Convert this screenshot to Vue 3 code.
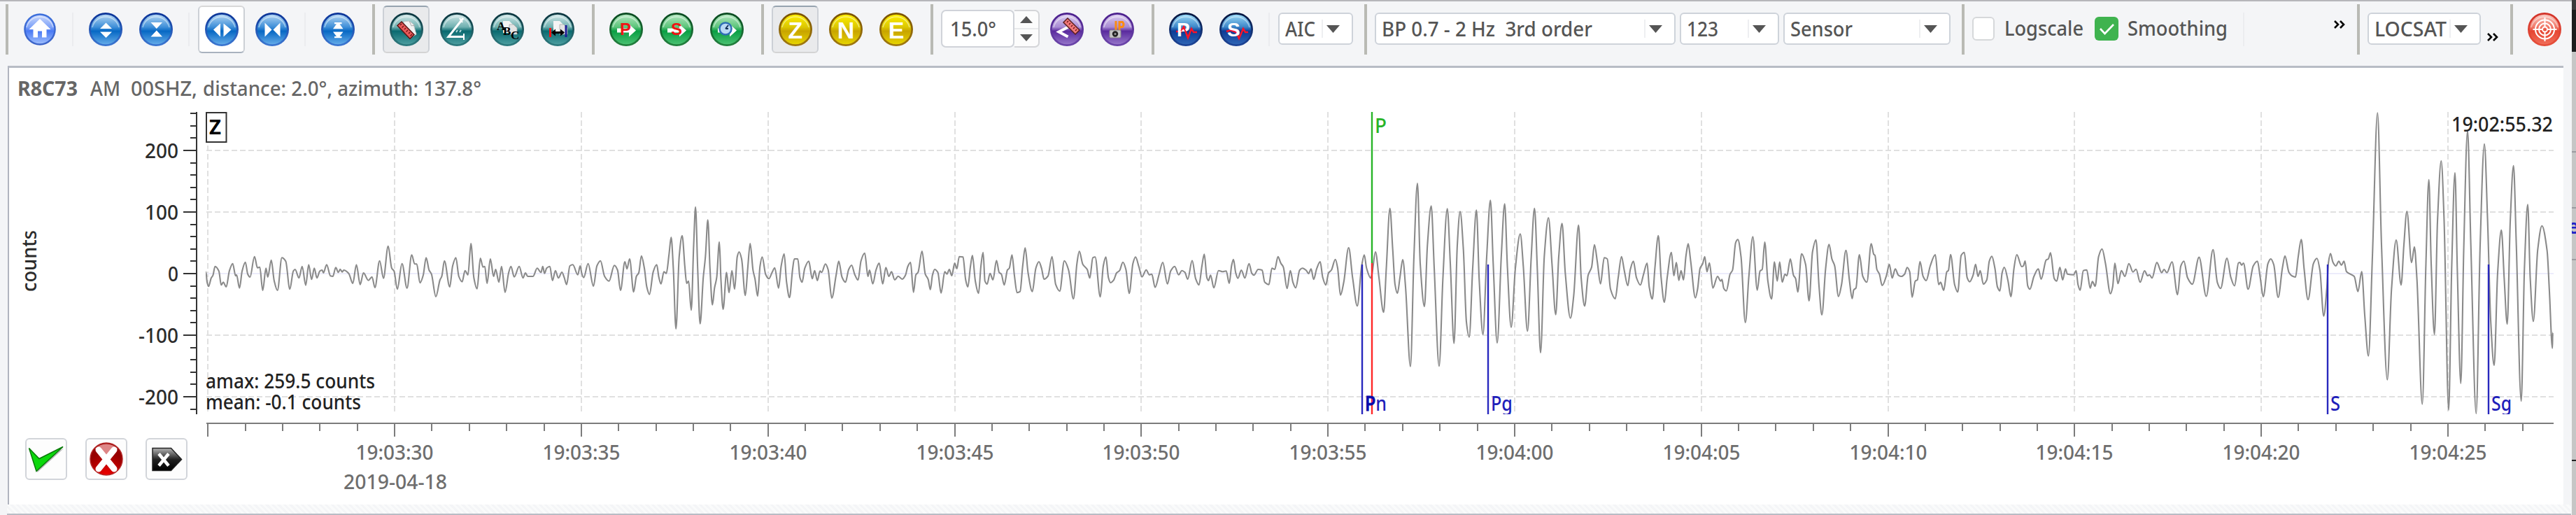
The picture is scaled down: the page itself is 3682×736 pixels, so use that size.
<script setup>
const BLUE = 'blue', TEAL = 'teal', GREEN = 'green', GOLD = 'gold', PURPLE = 'purple', NAVY = 'navy'

// Toolbar content, left to right
const items = [
  { t: 'grip', first: true },
  { t: 'btn', c: 'home', g: 'home' },
  { t: 'sep' },
  { t: 'btn', c: BLUE, g: 'expandV' },
  { t: 'btn', c: BLUE, g: 'shrinkV', next: true },
  { t: 'sep' },
  { t: 'btn', c: BLUE, g: 'expandH', raised: true },
  { t: 'btn', c: BLUE, g: 'shrinkH', next: true },
  { t: 'sep' },
  { t: 'btn', c: BLUE, g: 'fitV' },
  { t: 'grip' },
  { t: 'btn', c: TEAL, g: 'ruler', pressed: true },
  { t: 'btn', c: TEAL, g: 'angle', next: true },
  { t: 'btn', c: TEAL, g: 'abc', next: true },
  { t: 'btn', c: TEAL, g: 'span', next: true },
  { t: 'grip' },
  { t: 'btn', c: GREEN, g: 'goP' },
  { t: 'btn', c: GREEN, g: 'goS', next: true },
  { t: 'btn', c: GREEN, g: 'goClock', next: true },
  { t: 'grip' },
  { t: 'btn', c: GOLD, g: 'letter', l: 'Z', pressed: true },
  { t: 'btn', c: GOLD, g: 'letter', l: 'N', next: true },
  { t: 'btn', c: GOLD, g: 'letter', l: 'E', next: true },
  { t: 'grip' },
  { t: 'spin' },
  { t: 'btn', c: PURPLE, g: 'rotate', next: true },
  { t: 'btn', c: PURPLE, g: 'camera', next: true },
  { t: 'grip' },
  { t: 'btn', c: NAVY, g: 'pick', l: 'P' },
  { t: 'btn', c: NAVY, g: 'pick', l: 'S', next: true },
  { t: 'sep' },
  { t: 'combo', k: 'aic', label: 'AIC', len: 43 },
  { t: 'grip' },
  { t: 'combo', k: 'filter', label: 'BP 0.7 - 2 Hz\u00a0 3rd order', len: 301 },
  { t: 'combo', k: 'num', label: '123', len: 45 },
  { t: 'combo', k: 'sensor', label: 'Sensor', len: 89 },
  { t: 'grip' },
  { t: 'check', k: 'off', label: 'Logscale', len: 113 },
  { t: 'check', k: 'on', label: 'Smoothing', len: 143 },
  { t: 'sep', wide: true },
  { t: 'more', k: 'hi' },
  { t: 'grip' },
  { t: 'combo', k: 'loc', label: 'LOCSAT', len: 103 },
  { t: 'more', k: 'lo' },
  { t: 'grip' },
  { t: 'btn', c: 'red', g: 'target' },
]

const orbs = [
  { id: 'blue', rim: ['#0a3296', '#3c78d2'], fill: ['#b4d7f4', '#3f8fd8', '#0768c4', '#62aae8'] },
  { id: 'home', rim: ['#3c6fdc', '#3c64c8'], fill: ['#c8d7fc', '#7ea2f8', '#4a7af4', '#9cbcfc'] },
  { id: 'teal', rim: ['#08323c', '#2e7c80'], fill: ['#d2e8e8', '#6fb0b0', '#0a6a70', '#4a9c9e'] },
  { id: 'green', rim: ['#08481f', '#23823f'], fill: ['#b4e8c0', '#5cc47a', '#0a9e44', '#48c070'] },
  { id: 'gold', rim: ['#7a5200', '#a07a10'], fill: ['#fff000', '#dcc800', '#c8a400', '#e6d400'] },
  { id: 'purple', rim: ['#4a1e8c', '#6c46aa'], fill: ['#dccdf0', '#a98cd4', '#5a2a9e', '#9474c8'] },
  { id: 'navy', rim: ['#04143c', '#1e469a'], fill: ['#9cdcf8', '#3c86c8', '#0c3c96', '#2e64b4'] },
  { id: 'red', rim: ['#d23228', '#e6503c'], fill: ['#fac8c0', '#f07868', '#e64632', '#f06c58'] },
]

// Turning points of the trace: [x origin, x scale, y origin, y scale, x, y, x, y, ...]
const segments = [
  [280, 2.376, 150, 3, 34,715,38,760,43,778,52,742,58,730,65,692,78,712,86,772,93,760,103,780,114,710,125,680,135,733,138,728,148,785,157,712,168,674,176,725,184,738,199,650,209,698,217,695,227,795,238,700,244,738,256,665,266,755,277,795,292,655,305,670,319,790,331,712,337,705,350,742,361,692,373,773,383,685,393,748,402,700,411,742,421,712,429,708,433,720,444,685,457,733,465,735,475,697,484,718,490,704,497,716,502,708,519,722,533,765,545,685,558,770,569,720,586,752,598,737,608,783,624,668,637,743,653,605,665,700,673,712,684,790,700,680,717,785,733,643,743,682,750,682,761,763,772,730,782,655,792,708,800,725,815,822,829,750,835,735,844,668,862,780,872,690,883,655,893,735,904,758,914,710,924,728,934,594,944,740,955,788,966,657,975,695,981,692,989,765,1000,660,1011,735,1018,705,1029,760,1038,692,1050,803,1062,720,1070,692,1081,737,1098,692,1111,742,1119,720,1127,735,1145,735,1159,700,1172,718,1178,692,1184,722,1191,700,1202,692,1211,753,1221,710,1231,742,1243,717,1251,740,1259,770,1270,690,1280,685,1297,728,1305,690,1311,725,1317,740,1332,680,1350,777,1362,690,1374,668,1388,735,1403,755,1421,688,1432,708,1442,795,1457,672,1464,703,1473,660],
  [900, 2.613, 150, 3, 15,802,25,735,34,720,44,647,55,700,64,780,74,812,88,715,101,685,109,738,117,767,128,715,137,722,147,640,155,567,163,700,173,960,185,650,196,560,206,690,213,765,220,755,230,880,239,600,246,437,254,700,263,938,275,740,283,650,292,493,300,700,309,857,317,785,325,740,335,587,341,750,349,876,362,718,371,805,382,710,392,790,402,650,409,630,418,660,432,817,441,700,450,594,461,710,468,745,478,820,487,690,495,652,508,727,520,745,532,718,542,698,556,785,566,690,577,638,586,760,597,826,609,700,615,660,628,660,636,740,644,760,654,700,669,670,682,745,691,710,701,753,711,712,717,718,731,682,741,705,755,828,771,730,781,670,793,738,806,760,818,705,829,687,840,725,853,751,864,668,878,635,890,735,896,708,908,767,920,708,932,678,945,767,957,697,968,735,978,715,990,750,1003,734,1018,747,1030,730,1039,692,1049,675,1060,803,1069,728,1077,718,1092,627,1104,725,1115,748,1123,792,1131,730,1139,705,1151,718,1163,806,1177,715,1185,725,1194,705,1203,732,1214,678,1222,702,1231,650,1245,652,1255,750,1263,780,1273,690,1280,645,1291,755,1303,808,1312,690,1320,632,1327,755,1335,768,1346,722,1357,750,1370,667,1380,718,1388,725,1399,772,1411,707,1418,700,1428,643,1437,730,1447,805,1458,800,1468,690,1477,613,1488,720,1504,800,1517,700],
  [1480, 3, 150, 3, 15,672,26,700,37,747,54,733,71,650,87,770,104,798,124,668,142,707,163,831,178,680,188,627,203,683,222,705,233,742,246,655,256,652,278,823,291,690,302,652,313,740,322,762,336,750,348,720,361,710,375,674,388,705,402,808,418,680,429,652,444,695,457,737,475,707,488,728,499,725,513,782,530,727,546,675,566,767,580,712,597,692,614,728,628,710,641,718,653,747,672,667,687,745,701,772,714,690,724,640,735,740,742,753,751,730,765,784,785,710,803,715,818,712,831,765,841,690,849,662,859,720,868,743,883,708,898,742,916,680,928,722,937,730,955,705,972,708,983,760,1001,770,1014,700,1026,705,1040,650,1052,678,1063,695,1079,787,1093,710,1104,760,1116,784,1133,708,1145,700,1162,710,1171,723,1182,703,1193,748,1206,702,1221,672,1232,740,1245,772,1257,720,1269,708,1286,662,1296,700,1308,815,1322,760,1343,612,1360,740,1380,862,1399,690,1410,643,1420,700],
  [1900, 3, 150, 3, 178,742,184,720,198,630,213,740,233,889,245,690,260,443,272,620,282,770,292,808,303,740,315,663,327,780,348,1121,363,650,378,336,390,680,408,864,421,600,437,433,450,700,471,1120,487,750,506,445,519,680,535,1022,549,600,561,457,575,620,588,930,600,995,615,700,631,451,643,750,659,984,675,650,691,409,703,680,720,1020,738,640,752,424,764,700,780,953,798,700,819,553,832,690,850,970,866,650,880,443,892,700,906,1062,922,650,940,484,955,680,971,899,984,650,998,508,1012,720,1034,914,1048,820,1069,515,1080,740,1095,862,1110,730,1125,695,1137,599,1149,670,1163,767,1179,655,1192,660,1206,790,1226,831,1239,740,1253,650,1265,710,1280,775,1291,705,1304,670,1317,740,1334,772,1347,728,1363,678,1372,780,1385,832,1397,690,1411,560,1423,740,1437,846,1449,740,1467,632],
  [2380, 2.24, 250, 3, 28,432,36,375,44,452,51,410,59,450,67,345,74,295,82,370,97,527,104,490,112,400,120,382,127,350,134,415,142,377,153,485,168,435,178,455,182,448,188,487,196,497,208,425,216,408,226,290,233,277,243,350,257,633,268,440,281,265,295,494,304,412,311,405,319,288,329,455,341,532,350,373,359,455,367,373,375,460,384,425,390,433,401,360,411,430,418,445,425,502,437,338,450,385,461,540,472,330,483,278,493,480,502,600,514,400,525,298,534,360,543,390,555,521,565,470,579,323,590,450,599,530,604,493,611,485,622,342,633,435,646,460,660,295,668,340,672,345,678,405,686,425,695,474,709,430,718,383,727,442,737,403,747,430,757,435,767,425,775,397,783,415,791,524,801,455,808,450,816,371,826,435,836,453,849,390,865,342,876,470,882,460,892,495,902,415,907,410,914,341,927,470,937,502,948,345,958,332,967,440,975,458,986,430,994,383,1002,435,1009,410,1019,468,1030,450,1038,370,1046,349,1056,400,1064,480,1072,497,1079,420,1086,396,1098,455,1107,522,1117,400,1126,342,1142,393,1147,390,1153,369,1161,475,1168,490,1181,435,1195,403,1204,447,1220,365,1227,360,1234,334,1246,445,1254,455,1264,396,1273,450,1282,403,1288,425,1308,428,1316,410,1322,470,1329,494,1339,410,1350,407,1361,485,1368,457,1377,477,1388,350,1399,317,1410,380,1426,509,1433,480,1440,378,1450,466,1461,410,1472,435,1485,380,1498,416,1508,404,1521,460,1535,411,1545,432,1551,428,1559,442],
  [2790, 1.758, 0, 2.13, 515,799,527,830,533,820,540,830,553,797,567,897,575,810,583,795,592,845,604,865,621,783,639,902,656,760,667,860,675,878,691,786,701,845,710,870,720,800],
  [3200, 3, 150, 3, 5,675,12,687,20,678,40,790,62,690,80,670,92,740,105,822,125,680,137,660,150,685,169,825,187,700,198,647,215,718,228,733,243,738,255,650,268,577,280,700,297,835,320,680,335,658,348,710,364,905,378,780,384,680,393,637,404,675,416,690,429,670,440,687,451,670,462,715,495,735,511,800,527,714,540,900,556,1076,573,650,595,34,612,600,637,1178,655,790,675,579,696,772,708,600,721,456,741,676,753,608,764,750,787,1283,802,700,815,320,825,680,839,984,852,500,868,240,880,480,900,1308,913,700,927,290,937,700,952,1194,965,600,981,110,995,600,1018,1323,1035,600,1053,167,1067,500,1080,920,1095,1117,1110,720,1126,536,1138,740,1151,940,1164,500,1178,260,1190,600,1211,1270,1225,700,1239,427,1250,750,1263,928,1282,620,1300,518,1322,625,1332,800,1345,1043,1346,975],
]

// Monotone cubic interpolation: no overshoot at the turning points
function tracePath() {
  const p = []
  for (const [ox, sx, oy, sy, ...v] of segments) {
    for (let i = 0; i < v.length; i += 2) p.push([ox + v[i] / sx, oy + v[i + 1] / sy])
  }
  const slope = i => (p[i + 1][1] - p[i][1]) / (p[i + 1][0] - p[i][0])
  const m = p.map((_, i) => {
    if (i === 0 || i === p.length - 1) return 0
    const a = slope(i - 1), b = slope(i)
    return a * b <= 0 ? 0 : (2 * a * b) / (a + b)
  })
  let d = `M${p[0][0].toFixed(1)} ${p[0][1].toFixed(1)}`
  for (let i = 1; i < p.length; i++) {
    const h = (p[i][0] - p[i - 1][0]) / 3
    const c = [p[i - 1][0] + h, p[i - 1][1] + m[i - 1] * h, p[i][0] - h, p[i][1] - m[i] * h, ...p[i]]
    d += 'C' + c.map(n => n.toFixed(1)).join(' ')
  }
  return d
}
const trace = tracePath()

const pad = n => String(n).padStart(2, '0')
const xTicks = Array.from({ length: 63 }, (_, k) => {
  const s = 3 * 60 + 25 + k
  const major = k % 5 === 0
  return {
    x: Math.round(297.3 + k * 53.36),
    major,
    label: major && k ? `19:${pad(Math.floor(s / 60))}:${pad(s % 60)}` : '',
  }
})
const yTicks = []
for (let v = -220; v <= 260; v += 20) {
  yTicks.push({ y: Math.round(391 - v * 0.88), major: v % 100 === 0, v })
}
const yLen = { '200': 48, '100': 48, '0': 15, '-100': 57, '-200': 57 }

const phases = [
  { x: 1947, l: 'Pn', len: 31, strong: true },
  { x: 2127, l: 'Pg', len: 31 },
  { x: 3327, l: 'S', len: 14 },
  { x: 3557, l: 'Sg', len: 29 },
]
</script>

<template>
  <div class="screen">
    <svg class="defs" width="0" height="0">
      <defs>
        <template v-for="o in orbs" :key="o.id">
          <linearGradient :id="'rim-' + o.id" x1="0" y1="0" x2="0" y2="1">
            <stop offset="0" :stop-color="o.rim[0]" /><stop offset="1" :stop-color="o.rim[1]" />
          </linearGradient>
          <linearGradient :id="'orb-' + o.id" x1="0" y1="0" x2="0" y2="1">
            <stop offset="0" :stop-color="o.fill[0]" /><stop offset=".42" :stop-color="o.fill[1]" />
            <stop offset=".56" :stop-color="o.fill[2]" /><stop offset="1" :stop-color="o.fill[3]" />
          </linearGradient>
        </template>
      </defs>
    </svg>

    <div class="window">
      <div class="toolbar">
        <template v-for="(it, i) in items" :key="i">
          <i v-if="it.t === 'grip'" class="grip" :class="{ first: it.first }"></i>
          <i v-else-if="it.t === 'sep'" class="sep" :class="{ wide: it.wide }"></i>

          <div v-else-if="it.t === 'btn'" class="btn" :class="{ raised: it.raised, pressed: it.pressed, next: it.next }">
            <svg width="48" height="48" viewBox="0 0 48 48">
              <circle cx="24" cy="24" :r="it.c === 'home' ? 22.8 : 24" :fill="`url(#rim-${it.c})`" />
              <circle cx="24" cy="24" :r="it.c === 'home' ? 20.3 : 21.3" :fill="`url(#orb-${it.c})`" />
              <path d="M5 21A19.5 19.5 0 0 1 43 21" fill="none" stroke="#fff" stroke-opacity=".45" stroke-width="1.5" />

              <path v-if="it.g === 'home'" d="M24 9L8.5 24h6v11.500h6.500v-9h6v9h6.500V24h6z" fill="#fff" />
              <path v-else-if="it.g === 'expandV'" d="M16 23h17l-8.500-8.500zM16 27.500h17l-8.500 8.500z" fill="#fff" />
              <path v-else-if="it.g === 'shrinkV'" d="M16.500 14h16.500l-8.200 9zM16.500 34.500h16.500l-8.200-9z" fill="#fff" />
              <path v-else-if="it.g === 'expandH'" d="M12 24.500L22 15.500v19zM37.500 24.500L26.500 15.500v19z" fill="#fff" />
              <path v-else-if="it.g === 'shrinkH'" d="M13.500 14.500v20l10-10zM35.500 14.500v20l-10-10z" fill="#fff" />
              <path v-else-if="it.g === 'fitV'" d="M19 14h10.500v2.200h-3l5 7h-14.500l5-7h-3zM17 27.500h14.500l-5 6.500h3v2.200H19V34h3z" fill="#fff" />

              <g v-else-if="it.g === 'ruler'">
                <path d="M20 13l8-1 6 5 4 14-5 3-13-13z" fill="#f2f2f2" stroke="#c8c8c8" />
                <path d="M28 12l3 7 5-1" fill="none" stroke="#aaa" />
                <path d="M11 18.500l6-5.500 18 18.500-6 6z" fill="#e85a5a" stroke="#5a1414" stroke-width="1.5" />
                <path d="M17 16l-2 2M20 19l-2.500 2.500M23 22l-2 2M26 25l-2.500 2.500M29 28l-2 2M32 31l-2.500 2.500" stroke="#701414" stroke-width="1.4" />
              </g>
              <g v-else-if="it.g === 'angle'" fill="none" stroke="#fff" stroke-width="3">
                <path d="M33 8L12 34.500h23" />
                <path d="M28 8l4 6M34 30v9" stroke-width="2" />
                <path d="M23 28l2-3M28 28l2-3" stroke-width="2" stroke="#b4dcdc" />
              </g>
              <g v-else-if="it.g === 'abc' || it.g === 'span'">
                <path d="M18 12h9l5 5v12H18z" fill="#f4f4f4" />
                <path d="M27 17h6l5 5v9H27z" fill="#e4e4e4" stroke="#aaa" stroke-width=".8" />
                <g v-if="it.g === 'abc'" class="glyph serif" font-size="17">
                  <text x="9" y="25">A</text><text x="18" y="32">B</text><text x="29" y="38">C</text>
                </g>
                <g v-else fill="none" stroke-width="3">
                  <path d="M17 28.500h16" stroke="#000" />
                  <path d="M15 28.500l6-5v10zM34 28.500l-6-5v10z" fill="#000" stroke="none" />
                  <path d="M13.500 22v13" stroke="#f01414" /><path d="M36 18v17" stroke="#1e1e96" />
                </g>
              </g>
              <g v-else-if="it.g === 'goP' || it.g === 'goS' || it.g === 'goClock'">
                <path d="M11 22.500h17v-6l10 9-10 9v-6H11z" fill="#fff" />
                <text v-if="it.g === 'goP'" class="glyph hot" x="15" y="31.500" font-size="24">P</text>
                <text v-else-if="it.g === 'goS'" class="glyph hot" x="16" y="31.500" font-size="24">S</text>
                <g v-else>
                  <circle cx="22" cy="23" r="8.500" fill="#b8d8f4" stroke="#2e6eb4" stroke-width="2.500" />
                  <path d="M22 23l4-5M22 23h4" stroke="#14325a" stroke-width="2" />
                </g>
              </g>
              <text v-else-if="it.g === 'letter'" class="glyph mid" x="24" y="36.500" font-size="34">{{ it.l }}</text>
              <g v-else-if="it.g === 'rotate'">
                <path d="M27 20L12.500 27.500l13 7" fill="none" stroke="#fff" stroke-width="4" />
                <path d="M19 14l6-6 17 17-6 6z" fill="#f07878" stroke="#5a1e1e" stroke-width="1.500" />
                <path d="M26 12l-2 2M29 15l-2 2M32 18l-2 2M35 21l-2 2M38 24l-2 2" stroke="#701414" stroke-width="1.400" />
              </g>
              <g v-else-if="it.g === 'camera'">
                <path d="M22 12v13M27 26V13.500h4.500q3 3.500 0 7h-4.500" fill="none" stroke="#fa8c14" stroke-width="3" />
                <rect x="13" y="25" width="16" height="11" rx="1.500" fill="#c4c4c4" stroke="#888" />
                <circle cx="21" cy="30.500" r="4.200" fill="#222" /><circle cx="21" cy="30.500" r="1.500" fill="#999" />
              </g>
              <g v-else-if="it.g === 'pick'">
                <path v-if="it.l === 'P'" d="M10 27h8l3-7 6 16 5-13 3 5h5" fill="none" stroke="#fa1428" stroke-width="2.500" />
                <path v-else d="M10 27l6-2 8 3 4 9 6-14 3 5h4" fill="none" stroke="#fa1428" stroke-width="2.500" />
                <text class="glyph" x="11" y="34" font-size="28">{{ it.l }}</text>
                <path v-if="it.l === 'P'" d="M17 26l4-5 6 15 2-4" fill="none" stroke="#fa1428" stroke-width="2" />
              </g>
              <g v-else fill="none" stroke="#fff" stroke-width="2">
                <circle cx="24.500" cy="24" r="13.500" /><circle cx="24.500" cy="24" r="8.500" /><circle cx="24.500" cy="24" r="3.500" />
                <path d="M24.500 7v14M24.500 27v14M7.500 24h14M27.500 24h14" />
              </g>
            </svg>
          </div>

          <div v-else-if="it.t === 'spin'" class="spin">
            <div class="spin-field"><svg width="66" height="40"><text x="0" y="30.500" textLength="66" lengthAdjust="spacingAndGlyphs">15.0°</text></svg></div>
            <div class="spin-btns">
              <div><svg width="18" height="10"><path d="M0 10L9 0l9 10z" fill="#555" /></svg></div>
              <div><svg width="18" height="10"><path d="M0 0h18L9 10z" fill="#555" /></svg></div>
            </div>
          </div>

          <div v-else-if="it.t === 'combo'" class="combo" :class="it.k">
            <svg class="combo-label" :width="it.len + 4" height="40"><text x="0" y="31" :textLength="it.len" lengthAdjust="spacingAndGlyphs">{{ it.label }}</text></svg>
            <i class="combo-line"></i>
            <svg width="19" height="11"><path d="M0 0h19L9.500 11z" fill="#555" /></svg>
          </div>

          <div v-else-if="it.t === 'check'" class="check" :class="it.k">
            <span class="box">
              <svg v-if="it.k === 'on'" width="34" height="34"><path d="M8 17l6.500 7L27 11" fill="none" stroke="#fff" stroke-width="2.600" /></svg>
            </span>
            <svg :width="it.len + 4" height="40"><text x="0" y="30" :textLength="it.len" lengthAdjust="spacingAndGlyphs">{{ it.label }}</text></svg>
          </div>

          <div v-else class="more" :class="it.k">
            <svg width="17" height="12"><path d="M1 1l5 5-5 5M9 1l5 5-5 5" fill="none" stroke="#000" stroke-width="2.600" /></svg>
          </div>
        </template>
      </div>

      <div class="panel">
        <svg class="plot" width="3651" height="624" viewBox="13 97 3651 624">
          <defs><clipPath id="plot-clip"><rect x="294" y="159" width="3358" height="433" /></clipPath></defs>

          <g fill="#666">
            <text x="25" y="137" font-weight="700" textLength="86" lengthAdjust="spacingAndGlyphs">R8C73</text>
            <text x="129" y="137" textLength="43" lengthAdjust="spacingAndGlyphs">AM</text>
            <text x="187" y="137" textLength="95" lengthAdjust="spacingAndGlyphs">00SHZ,</text>
            <text x="290" y="137" textLength="398" lengthAdjust="spacingAndGlyphs">distance: 2.0°, azimuth: 137.8°</text>
          </g>

          <g stroke="#e0e0e0" stroke-width="2" stroke-dasharray="8 4">
            <path v-for="t in xTicks.filter(t => t.major)" :key="t.x" :d="`M${t.x} 160V588`" />
            <path v-for="y in [215, 303, 479, 567]" :key="y" :d="`M295 ${y}H3650`" />
          </g>
          <path d="M295 391H3650" stroke="#ececfb" stroke-width="2" />

          <g stroke="#333" stroke-width="2">
            <path d="M281 160V592" />
            <path v-for="t in yTicks" :key="t.v" :d="`M${t.major ? 262 : 272} ${t.y}H281`" />
          </g>
          <g fill="#2c2c2c" text-anchor="end">
            <text v-for="t in yTicks.filter(t => t.major)" :key="t.v" x="255" :y="t.y + 10.5" :textLength="yLen[t.v]" lengthAdjust="spacingAndGlyphs">{{ t.v }}</text>
          </g>
          <text transform="translate(52 373) rotate(-90)" text-anchor="middle" fill="#2c2c2c" textLength="88" lengthAdjust="spacingAndGlyphs">counts</text>

          <g stroke="#7c7c7c" stroke-width="2">
            <path d="M295 605H3650" />
            <path v-for="t in xTicks" :key="t.x" :d="`M${t.x} 605V${t.major ? 624 : 616}`" />
          </g>
          <g fill="#6e6e6e" text-anchor="middle">
            <template v-for="t in xTicks" :key="t.x">
              <text v-if="t.label" :x="t.x" y="657" textLength="111" lengthAdjust="spacingAndGlyphs">{{ t.label }}</text>
            </template>
            <text x="565" y="699" textLength="148" lengthAdjust="spacingAndGlyphs">2019-04-18</text>
          </g>

          <path :d="trace" fill="none" stroke="#8a8a8a" stroke-width="2.1" stroke-linejoin="round" clip-path="url(#plot-clip)" />

          <g stroke-width="2.4">
            <path d="M1961 160V376" stroke="#28b428" />
            <path d="M1961 376V592" stroke="#ff2828" />
            <path v-for="p in phases" :key="p.x" :d="`M${p.x} 378V592`" stroke="#2828be" />
          </g>
          <text x="1965" y="190" fill="#28b428" textLength="17" lengthAdjust="spacingAndGlyphs">P</text>
          <g clip-path="url(#plot-clip)" fill="#2020ba">
            <text v-for="p in phases" :key="p.x" :x="p.x + 4" y="587" :class="{ strong: p.strong }" :textLength="p.len" lengthAdjust="spacingAndGlyphs"><tspan class="head">{{ p.l[0] }}</tspan>{{ p.l.slice(1) }}</text>
          </g>

          <g fill="#222">
            <text x="294" y="555" textLength="242" lengthAdjust="spacingAndGlyphs">amax: 259.5 counts</text>
            <text x="294" y="585" textLength="222" lengthAdjust="spacingAndGlyphs">mean: -0.1 counts</text>
            <text x="3504" y="188" textLength="145" lengthAdjust="spacingAndGlyphs">19:02:55.32</text>
          </g>
          <rect x="295" y="161" width="28.500" height="42" fill="#fff" stroke="#333" stroke-width="2" />
          <text x="299" y="192" font-weight="700" fill="#000" textLength="17" lengthAdjust="spacingAndGlyphs">Z</text>
        </svg>

        <div class="actions">
          <div class="action">
            <svg width="58" height="58" viewBox="0 0 58 58">
              <path d="M6 15l13.500 15.500L54 14 16.500 48z" fill="#555" opacity=".4" />
              <path d="M4.500 13.500l14.500 15L53 11.500 15 46.500z" fill="#0cd80c" stroke="#0a7a0a" stroke-width="1.500" />
            </svg>
          </div>
          <div class="action">
            <svg width="58" height="58" viewBox="0 0 58 58">
              <defs><radialGradient id="cancel" cx=".5" cy="1" r=".7"><stop offset="0" stop-color="#f00000" /><stop offset="1" stop-color="#960000" /></radialGradient></defs>
              <circle cx="29" cy="29" r="23" fill="url(#cancel)" stroke="#b42828" stroke-width="1.500" />
              <path d="M13 14a23 23 0 0 1 32 0q-6 9-16 9t-16-9z" fill="#f0a8a8" opacity=".8" />
              <path d="M18 16l22 27M40 16L18 43" stroke="#fff" stroke-width="9" stroke-linecap="round" />
            </svg>
          </div>
          <div class="action">
            <svg width="58" height="58" viewBox="0 0 58 58">
              <defs><linearGradient id="tag" x1="0" y1="0" x2="0" y2="1"><stop offset="0" stop-color="#b4b4b4" /><stop offset=".5" stop-color="#222" /><stop offset="1" stop-color="#000" /></linearGradient></defs>
              <path d="M9 13.500h26.500l15 16-15 16H9z" fill="url(#tag)" stroke="#222" stroke-width="1.500" />
              <path d="M18 21.500l14 17M32 21.500l-14 17" stroke="#fff" stroke-width="4.500" />
            </svg>
          </div>
        </div>
      </div>
      <div class="splitter"></div>
    </div>

    <div class="neighbour">
      <div class="n-dark"></div>
      <div class="n-a"></div>
      <div class="n-b"></div>
      <div class="n-c"><span class="n-text">e</span></div>
      <div class="n-d"></div>
      <div class="n-e"></div>
    </div>
  </div>
</template>

<style>
body { margin: 0; background: #f4f5f7; overflow: hidden; }
</style>

<style scoped>
.screen {
  display: flex;
  width: 3682px;
  height: 736px;
  overflow: hidden;
  background: #f4f5f7;
  color: #555;
  font-family: "Noto Sans", "Open Sans", sans-serif;
  font-size: 28px;
  font-weight: 500;
}
.defs { position: absolute; }
.screen svg { display: block; flex: none; overflow: visible; }
.toolbar text { fill: #555; }
.toolbar .glyph { font-family: "Liberation Sans", sans-serif; font-weight: 700; fill: #fff; }
.toolbar .glyph.hot { fill: #f01414; }
.toolbar .glyph.serif text { font-family: "Liberation Serif", serif; fill: #000; }
.glyph.mid { text-anchor: middle; }
.strong .head { fill: #0a0aaa; stroke: #0a0aaa; stroke-width: 1px; }

.window { width: 3676px; flex: none; display: flex; flex-direction: column; }
.toolbar {
  display: flex;
  align-items: center;
  box-sizing: border-box;
  height: 94px;
  padding-bottom: 12px;
  border-top: 2px solid #b6b6ba;
}
.toolbar > * { flex: none; box-sizing: border-box; }
.grip { width: 4px; height: 72px; margin: 0 11px 0 16px; background: #b9bab4; }
.grip.first { margin-left: 8px; }
.sep { width: 2px; height: 48px; margin: 0 12.500px; background: #ebecef; }
.sep.wide { margin: 0 128px 0 22px; }
.btn {
  display: flex;
  align-items: center;
  justify-content: center;
  width: 67px;
  height: 68px;
  border: 2px solid transparent;
  border-radius: 6px;
}
.btn.next { margin-left: 5px; }
.btn.raised { background: #fff; border-color: #d8d8d8 #ccd0d6 #a8b2be; }
.btn.pressed { background: #e9eaec; border-color: #96a3af #ccd0d6 #d4d4d4; }

.spin { display: flex; width: 141px; height: 54px; margin-bottom: 2px; }
.spin-field {
  display: flex;
  align-items: center;
  box-sizing: border-box;
  width: 105px;
  padding-left: 11px;
  border: 2px solid #d0d3d9;
  border-radius: 7px;
  background: #fff;
}
.spin-btns {
  display: flex;
  flex-direction: column;
  box-sizing: border-box;
  width: 36px;
  border: 2px solid #d4d5d8;
  border-left: 0;
  border-radius: 0 7px 7px 0;
  background: #fcfcfc;
}
.spin-btns div { flex: 1; display: flex; align-items: center; justify-content: center; }
.spin-btns div + div { border-top: 2px solid #e8e9eb; }

.combo {
  display: flex;
  align-items: center;
  height: 46px;
  padding: 0 17px 0 8px;
  margin-bottom: 2px;
  border: 2px solid #ced3da;
  border-radius: 6px;
  background: #fff;
}
.combo-label { margin-right: auto; }
.combo-line { width: 2px; height: 26px; margin-right: 5px; background: #eeeff1; }
.combo.aic { width: 107px; }
.combo.filter { width: 430px; }
.combo.num { width: 142px; margin-left: 6px; }
.combo.sensor { width: 239px; margin-left: 6px; }
.combo.loc { width: 162px; }

.check { display: flex; align-items: center; margin-bottom: 2px; }
.check.off { width: 175px; }
.check.on { width: 190px; }
.box { box-sizing: border-box; width: 32px; height: 34px; margin-right: 14px; border: 2px solid #d6d8da; border-radius: 6px; background: #fff; flex: none; }
.check.on .box { width: 34px; border: 0; background: #3fb34f; margin-right: 13px; }

.more.hi { margin-bottom: 14px; width: 17px; }
.more.lo { margin: 22px 0 0 9px; width: 17px; }

.panel {
  display: grid;
  box-sizing: border-box;
  width: 3653px;
  height: 627px;
  margin-left: 11px;
  border-top: 3px solid #b8bcc5;
  border-left: 2px solid #b0b4bf;
  background: #fff;
}
.plot, .actions { grid-area: 1 / 1; }
.actions { display: flex; align-self: end; gap: 26px; padding: 0 0 35px 23px; width: 240px; }
.action {
  box-sizing: border-box;
  display: flex;
  align-items: center;
  justify-content: center;
  width: 60px;
  height: 60px;
  border: 2px solid #d2d5da;
  border-radius: 6px;
  background: #fdfdfd;
}
.splitter {
  box-sizing: border-box;
  width: 3665px;
  height: 15px;
  margin-left: 10px;
  border-bottom: 2px solid #b8bcc5;
  background: repeating-linear-gradient(45deg, #f4f5f7 0 3px, #fafbfb 3px 6px);
}

.neighbour { flex: 1; display: flex; flex-direction: column; background: #c6c6c6; overflow: hidden; }
.neighbour > div { box-sizing: border-box; border-bottom: 2px solid #9c9ca0; flex: none; }
.n-dark { height: 74px; background: linear-gradient(#3c3c3c 14px, #1c1e1e 14px); }
.neighbour > .n-dark { border: 0; }
.n-a { height: 144px; }
.n-b { height: 80px; }
.n-c { height: 74px; }
.neighbour > .n-d { height: 287px; border-color: #222; }
.neighbour > .n-e { height: 77px; border: 0; }
.n-text { display: block; margin: 6px 0 0 -6px; color: #2323c8; font-size: 28px; line-height: 38px; font-weight: 600; }
</style>
